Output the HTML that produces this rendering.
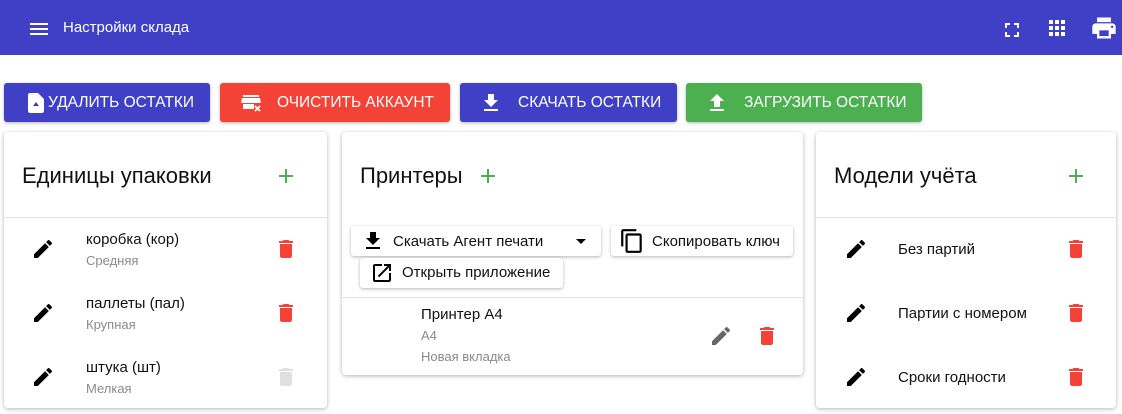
<!DOCTYPE html>
<html><head><meta charset="utf-8"><style>
*{margin:0;padding:0;box-sizing:border-box}
body{width:1122px;height:414px;overflow:hidden;background:#fff;font-family:"Liberation Sans",Arial,sans-serif;position:relative;color:#111}
.a{position:absolute}
.hdr{left:0;top:0;width:1122px;height:55px;background:#4040c6}
.btn{position:absolute;top:83px;height:39px;border-radius:3px;color:#fff;font-size:15.5px;display:flex;align-items:center;box-shadow:0 1px 3px rgba(0,0,0,.3)}
.card{position:absolute;top:132px;background:#fff;border-radius:4px;box-shadow:0 1px 4px rgba(0,0,0,.3)}
.title{position:absolute;font-size:22px;color:#111}
.div{position:absolute;left:0;right:0;height:1px;background:#e0e0e0}
.main{position:absolute;font-size:15px;color:#111}
.sub{position:absolute;font-size:13px;color:#8a8a8a}
svg{position:absolute}
.ob{position:absolute;background:#fff;border-radius:3px;box-shadow:0 1px 3px rgba(0,0,0,.3);font-size:15px;color:#111}
</style></head><body>
<div class="a hdr"></div>
<svg style="left:27px;top:17px" width="24" height="24" viewBox="0 0 24 24"><path fill="#fff" d="M3 18h18v-2H3v2zm0-5h18v-2H3v2zm0-7v2h18V6H3z"/></svg>
<div class="a" style="left:63px;top:19px;color:#fff;font-size:15px">Настройки склада</div>
<svg style="left:1000px;top:18px" width="24" height="24" viewBox="0 0 24 24"><path fill="#fff" d="M7 14H5v5h5v-2H7v-3zm-2-4h2V7h3V5H5v5zm12 7h-3v2h5v-5h-2v3zM14 5v2h3v3h2V5h-5z"/></svg>
<svg style="left:1045px;top:16px" width="24" height="24" viewBox="0 0 24 24"><path fill="#fff" d="M4 8h4V4H4v4zm6 12h4v-4h-4v4zm-6 0h4v-4H4v4zm0-6h4v-4H4v4zm6 0h4v-4h-4v4zm6-10v4h4V4h-4zm-6 4h4V4h-4v4zm6 6h4v-4h-4v4zm0 6h4v-4h-4v4z"/></svg>
<svg style="left:1090px;top:14px" width="28" height="28" viewBox="0 0 24 24"><path fill="#fff" d="M19 8H5c-1.66 0-3 1.34-3 3v6h4v4h12v-4h4v-6c0-1.660-1.34-3-3-3zm-3 11H8v-5h8v5zm3-7c-.55 0-1-.45-1-1s.45-1 1-1 1 .45 1 1-.45 1-1 1zm-1-9H6v4h12V3z"/></svg>

<div class="btn" style="left:4px;width:206px;background:#4040c6"><svg style="left:20px;top:8px" width="24" height="24" viewBox="0 0 24 24"><path fill="#fff" d="M14 2H6c-1.1 0-2 .9-2 2v16c0 1.1.9 2 2 2h12c1.1 0 2-.9 2-2V8l-6-6zm-2 17v-4H9l3-4 3 4h-3v4z"/></svg><span style="position:absolute;left:44px">УДАЛИТЬ ОСТАТКИ</span></div>
<div class="btn" style="left:220px;width:230px;background:#f44336"><svg style="left:18px;top:8px" width="26" height="24" viewBox="0 0 24 24"><path fill="#fff" d="M4 4h16v2H4zM3 7h18l1 5H2zM4 13h11v5H4z"/><path fill="#fff" d="M16 15l5 5M21 15l-5 5" stroke="#fff" stroke-width="1.8"/></svg><span style="position:absolute;left:57px">ОЧИСТИТЬ АККАУНТ</span></div>
<div class="btn" style="left:460px;width:217px;background:#4040c6"><svg style="left:19px;top:8px" width="24" height="24" viewBox="0 0 24 24"><path fill="#fff" d="M19 9h-4V3H9v6H5l7 7 7-7zM5 18v2h14v-2H5z"/></svg><span style="position:absolute;left:58px">СКАЧАТЬ ОСТАТКИ</span></div>
<div class="btn" style="left:686px;width:236px;background:#4caf50"><svg style="left:19px;top:8px" width="24" height="24" viewBox="0 0 24 24"><path fill="#fff" d="M9 16h6v-6h4l-7-7-7 7h4zm-4 2h14v2H5z"/></svg><span style="position:absolute;left:58px">ЗАГРУЗИТЬ ОСТАТКИ</span></div>

<!-- left card -->
<div class="card" style="left:4px;width:323px;height:276px">
 <div class="title" style="left:18px;top:31px">Единицы упаковки</div>
 <svg style="left:270px;top:32px" width="24" height="24" viewBox="0 0 24 24"><path fill="#4caf50" d="M19 13h-6v6h-2v-6H5v-2h6V5h2v6h6v2z"/></svg>
 <div class="div" style="top:85px"></div>
 <svg style="left:27px;top:105px" width="24" height="24" viewBox="0 0 24 24"><path fill="#000" d="M3 17.25V21h3.75L17.81 9.94l-3.75-3.75L3 17.25zM20.71 7.04a1 1 0 000-1.41l-2.34-2.340a1 1 0 00-1.41 0l-1.83 1.83 3.75 3.75 1.83-1.83z"/></svg>
 <div class="main" style="left:82px;top:99px">коробка (кор)</div><div class="sub" style="left:82px;top:121px">Средняя</div>
 <svg style="left:270px;top:105px" width="24" height="24" viewBox="0 0 24 24"><path fill="#f44336" d="M6 19c0 1.1.9 2 2 2h8c1.1 0 2-.9 2-2V7H6v12zM19 4h-3.5l-1-1h-5l-1 1H5v2h14V4z"/></svg>
 <svg style="left:27px;top:169px" width="24" height="24" viewBox="0 0 24 24"><path fill="#000" d="M3 17.25V21h3.75L17.81 9.94l-3.75-3.75L3 17.25zM20.71 7.04a1 1 0 000-1.41l-2.34-2.34a1 1 0 00-1.41 0l-1.83 1.83 3.75 3.75 1.83-1.83z"/></svg>
 <div class="main" style="left:82px;top:163px">паллеты (пал)</div><div class="sub" style="left:82px;top:185px">Крупная</div>
 <svg style="left:270px;top:169px" width="24" height="24" viewBox="0 0 24 24"><path fill="#f44336" d="M6 19c0 1.1.9 2 2 2h8c1.1 0 2-.9 2-2V7H6v12zM19 4h-3.5l-1-1h-5l-1 1H5v2h14V4z"/></svg>
 <svg style="left:27px;top:233px" width="24" height="24" viewBox="0 0 24 24"><path fill="#000" d="M3 17.25V21h3.75L17.81 9.94l-3.75-3.75L3 17.25zM20.71 7.04a1 1 0 000-1.41l-2.34-2.34a1 1 0 00-1.41 0l-1.83 1.83 3.75 3.75 1.83-1.83z"/></svg>
 <div class="main" style="left:82px;top:227px">штука (шт)</div><div class="sub" style="left:82px;top:249px">Мелкая</div>
 <svg style="left:270px;top:233px" width="24" height="24" viewBox="0 0 24 24"><path fill="#e0e0e0" d="M6 19c0 1.1.9 2 2 2h8c1.1 0 2-.9 2-2V7H6v12zM19 4h-3.5l-1-1h-5l-1 1H5v2h14V4z"/></svg>
</div>

<!-- middle card -->
<div class="card" style="left:342px;width:461px;height:243px">
 <div class="title" style="left:18px;top:31px">Принтеры</div>
 <svg style="left:134px;top:32px" width="24" height="24" viewBox="0 0 24 24"><path fill="#4caf50" d="M19 13h-6v6h-2v-6H5v-2h6V5h2v6h6v2z"/></svg>
 <div class="ob" style="left:9px;top:94px;width:250px;height:30px"><svg style="left:10px;top:3px" width="24" height="24" viewBox="0 0 24 24"><path fill="#000" d="M19 9h-4V3H9v6H5l7 7 7-7zM5 18v2h14v-2H5z"/></svg><span style="position:absolute;left:42px;top:7px">Скачать Агент печати</span><svg style="left:218px;top:3px" width="24" height="24" viewBox="0 0 24 24"><path fill="#000" d="M7 10l5 5 5-5z"/></svg></div>
 <div class="ob" style="left:269px;top:94px;width:182px;height:30px"><svg style="left:8px;top:2px" width="26" height="26" viewBox="0 0 24 24"><path fill="#000" d="M16 1H4c-1.1 0-2 .9-2 2v14h2V3h12V1zm3 4H8c-1.1 0-2 .9-2 2v14c0 1.1.9 2 2 2h11c1.1 0 2-.9 2-2V7c0-1.1-.9-2-2-2zm0 16H8V7h11v14z"/></svg><span style="position:absolute;left:41px;top:7px">Скопировать ключ</span></div>
 <div class="ob" style="left:18px;top:126px;width:203px;height:30px"><svg style="left:10px;top:3px" width="24" height="24" viewBox="0 0 24 24"><path fill="#000" d="M19 19H5V5h7V3H5a2 2 0 00-2 2v14a2 2 0 002 2h14c1.1 0 2-.9 2-2v-7h-2v7zM14 3v2h3.59l-9.83 9.83 1.41 1.41L19 6.41V10h2V3h-7z"/></svg><span style="position:absolute;left:42px;top:6px">Открыть приложение</span></div>
 <div class="div" style="top:165px"></div>
 <div class="main" style="left:79px;top:174px">Принтер А4</div>
 <div class="sub" style="left:79px;top:196px">А4</div>
 <div class="sub" style="left:79px;top:217px">Новая вкладка</div>
 <svg style="left:367px;top:192px" width="24" height="24" viewBox="0 0 24 24"><path fill="#666" d="M3 17.25V21h3.75L17.81 9.94l-3.75-3.75L3 17.25zM20.71 7.04a1 1 0 000-1.41l-2.34-2.34a1 1 0 00-1.41 0l-1.83 1.83 3.75 3.75 1.83-1.83z"/></svg>
 <svg style="left:413px;top:192px" width="24" height="24" viewBox="0 0 24 24"><path fill="#f44336" d="M6 19c0 1.1.9 2 2 2h8c1.1 0 2-.9 2-2V7H6v12zM19 4h-3.5l-1-1h-5l-1 1H5v2h14V4z"/></svg>
</div>

<!-- right card -->
<div class="card" style="left:816px;width:300px;height:276px">
 <div class="title" style="left:18px;top:31px">Модели учёта</div>
 <svg style="left:248px;top:32px" width="24" height="24" viewBox="0 0 24 24"><path fill="#4caf50" d="M19 13h-6v6h-2v-6H5v-2h6V5h2v6h6v2z"/></svg>
 <div class="div" style="top:85px"></div>
 <svg style="left:28px;top:105px" width="24" height="24" viewBox="0 0 24 24"><path fill="#000" d="M3 17.25V21h3.75L17.81 9.94l-3.75-3.75L3 17.25zM20.71 7.04a1 1 0 000-1.41l-2.34-2.34a1 1 0 00-1.41 0l-1.83 1.83 3.75 3.75 1.83-1.83z"/></svg>
 <div class="main" style="left:82px;top:109px">Без партий</div>
 <svg style="left:248px;top:105px" width="24" height="24" viewBox="0 0 24 24"><path fill="#f44336" d="M6 19c0 1.1.9 2 2 2h8c1.1 0 2-.9 2-2V7H6v12zM19 4h-3.5l-1-1h-5l-1 1H5v2h14V4z"/></svg>
 <svg style="left:28px;top:169px" width="24" height="24" viewBox="0 0 24 24"><path fill="#000" d="M3 17.25V21h3.75L17.81 9.94l-3.75-3.75L3 17.25zM20.71 7.04a1 1 0 000-1.41l-2.34-2.34a1 1 0 00-1.41 0l-1.83 1.83 3.75 3.75 1.83-1.83z"/></svg>
 <div class="main" style="left:82px;top:173px">Партии с номером</div>
 <svg style="left:248px;top:169px" width="24" height="24" viewBox="0 0 24 24"><path fill="#f44336" d="M6 19c0 1.1.9 2 2 2h8c1.1 0 2-.9 2-2V7H6v12zM19 4h-3.5l-1-1h-5l-1 1H5v2h14V4z"/></svg>
 <svg style="left:28px;top:233px" width="24" height="24" viewBox="0 0 24 24"><path fill="#000" d="M3 17.25V21h3.75L17.81 9.94l-3.75-3.75L3 17.25zM20.71 7.04a1 1 0 000-1.41l-2.34-2.34a1 1 0 00-1.41 0l-1.83 1.83 3.75 3.75 1.83-1.83z"/></svg>
 <div class="main" style="left:82px;top:237px">Сроки годности</div>
 <svg style="left:248px;top:233px" width="24" height="24" viewBox="0 0 24 24"><path fill="#f44336" d="M6 19c0 1.1.9 2 2 2h8c1.1 0 2-.9 2-2V7H6v12zM19 4h-3.5l-1-1h-5l-1 1H5v2h14V4z"/></svg>
</div>
</body></html>
